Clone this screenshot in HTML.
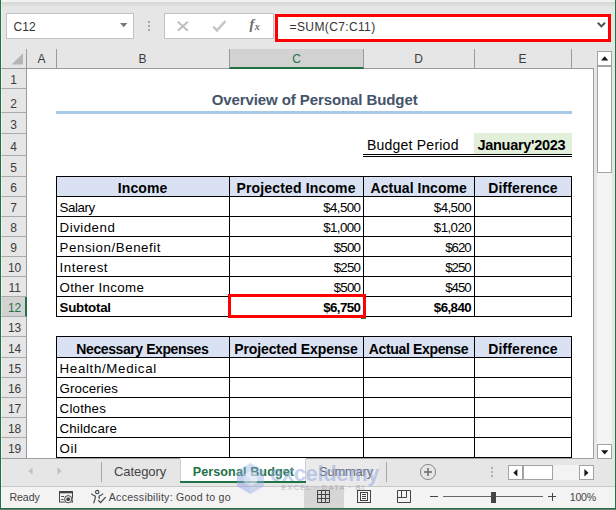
<!DOCTYPE html>
<html><head><meta charset="utf-8"><title>Personal Budget</title>
<style>
html,body{margin:0;padding:0;}
body{width:616px;height:510px;position:relative;overflow:hidden;background:#e6e6e6;font-family:"Liberation Sans",sans-serif;}
body div{position:absolute;box-sizing:border-box;}
.t{white-space:nowrap;}
svg{position:absolute;overflow:visible;}
</style></head><body>

<div style="left:0px;top:0px;width:616px;height:2px;background:#f1f1f0;"></div>
<div style="left:0px;top:2px;width:616px;height:6px;background:linear-gradient(#d6d6d6,#e6e6e6);"></div>
<div style="left:6px;top:13px;width:128px;height:26px;background:#fff;border:1px solid #c3c3c3;"></div>
<div class="t" id="namebox" style="font-size:12px;color:#333;letter-spacing:0.142px;top:20px;line-height:14px;height:14px;left:13.5px;">C12</div>
<svg style="left:120px;top:23px" width="8" height="5"><path d="M0 0h7.4L3.7 4.2z" fill="#777"/></svg>
<div style="left:148px;top:21px;width:2px;height:2px;background:#a6a6a6;"></div>
<div style="left:148px;top:25px;width:2px;height:2px;background:#a6a6a6;"></div>
<div style="left:148px;top:29px;width:2px;height:2px;background:#a6a6a6;"></div>
<div style="left:164px;top:13px;width:110px;height:26px;background:#fff;border:1px solid #c3c3c3;"></div>
<svg style="left:177px;top:21px" width="12" height="11"><path d="M0.8 0.8L10.8 9.8M10.8 0.8L0.8 9.8" stroke="#bdbdbd" stroke-width="1.9" fill="none"/></svg>
<svg style="left:212px;top:20px" width="15" height="12"><path d="M1.2 6.6L5 10.4L13.4 1.2" stroke="#c6c6c6" stroke-width="2.5" fill="none"/></svg>
<div class="t" id="fx" style="left:249.5px;top:17px;font-family:'Liberation Serif',serif;font-style:italic;font-weight:bold;font-size:14px;line-height:15px;height:15px;color:#6a6a6a;letter-spacing:-0.6px;">f<span style="font-size:10px;position:relative;top:0.5px;margin-left:1.2px;">x</span></div>
<div style="left:275px;top:14px;width:336px;height:28px;background:#fff;border:3px solid #ff0000;"></div>
<div class="t" id="formula" style="font-size:12px;color:#333;letter-spacing:0.373px;top:20px;line-height:14px;height:14px;left:289.6px;">=SUM(C7:C11)</div>
<svg style="left:597px;top:22px" width="9" height="6"><path d="M0.8 0.8L4.4 4.4L8 0.8" stroke="#505050" stroke-width="2" fill="none"/></svg>
<div style="left:27px;top:69px;width:566px;height:389px;background:#fff;"></div>
<div style="left:593px;top:69px;width:1px;height:390px;background:#a0a0a0;"></div>
<div style="left:0px;top:458px;width:594px;height:1px;background:#a0a0a0;"></div>
<div style="left:230px;top:49px;width:133px;height:18px;background:#d2d2d2;"></div>
<div style="left:229px;top:67px;width:135px;height:2px;background:#217346;"></div>
<div style="left:0px;top:68px;width:229px;height:1px;background:#9a9a9a;"></div>
<div style="left:364px;top:68px;width:230px;height:1px;background:#9a9a9a;"></div>
<div style="left:26px;top:49px;width:1px;height:19px;background:#9a9a9a;"></div>
<div style="left:56px;top:49px;width:1px;height:19px;background:#9a9a9a;"></div>
<div style="left:229px;top:49px;width:1px;height:19px;background:#9a9a9a;"></div>
<div style="left:363px;top:49px;width:1px;height:19px;background:#9a9a9a;"></div>
<div style="left:474px;top:49px;width:1px;height:19px;background:#9a9a9a;"></div>
<div style="left:571px;top:49px;width:1px;height:19px;background:#9a9a9a;"></div>
<svg style="left:11px;top:53px" width="13" height="12"><path d="M12 0.3V11.5H0.6z" fill="#b5b5b5"/></svg>
<div class="t" id="colA" style="font-size:12px;color:#3c3c3c;letter-spacing:0.000px;top:52px;line-height:14px;height:14px;left:-258.500px;width:600px;text-align:center;">A</div>
<div class="t" id="colB" style="font-size:12px;color:#3c3c3c;letter-spacing:0.000px;top:52px;line-height:14px;height:14px;left:-157.500px;width:600px;text-align:center;">B</div>
<div class="t" id="colC" style="font-size:12px;color:#217346;letter-spacing:0.000px;top:52px;line-height:14px;height:14px;left:-3.500px;width:600px;text-align:center;">C</div>
<div class="t" id="colD" style="font-size:12px;color:#3c3c3c;letter-spacing:0.000px;top:52px;line-height:14px;height:14px;left:118.500px;width:600px;text-align:center;">D</div>
<div class="t" id="colE" style="font-size:12px;color:#3c3c3c;letter-spacing:0.000px;top:52px;line-height:14px;height:14px;left:222.500px;width:600px;text-align:center;">E</div>
<div style="left:26px;top:69px;width:1px;height:389px;background:#9a9a9a;"></div>
<div style="left:1px;top:297px;width:24px;height:19px;background:#d2d2d2;"></div>
<div style="left:25px;top:297px;width:2px;height:20px;background:#217346;"></div>
<div style="left:1px;top:88px;width:25px;height:1px;background:#ababab;"></div>
<div class="t" id="row1" style="font-size:12px;color:#3c3c3c;letter-spacing:0.000px;top:73px;line-height:14px;height:14px;left:-286.500px;width:600px;text-align:center;">1</div>
<div style="left:1px;top:112px;width:25px;height:1px;background:#ababab;"></div>
<div class="t" id="row2" style="font-size:12px;color:#3c3c3c;letter-spacing:0.000px;top:97px;line-height:14px;height:14px;left:-286.500px;width:600px;text-align:center;">2</div>
<div style="left:1px;top:133px;width:25px;height:1px;background:#ababab;"></div>
<div class="t" id="row3" style="font-size:12px;color:#3c3c3c;letter-spacing:0.000px;top:118px;line-height:14px;height:14px;left:-286.500px;width:600px;text-align:center;">3</div>
<div style="left:1px;top:155px;width:25px;height:1px;background:#ababab;"></div>
<div class="t" id="row4" style="font-size:12px;color:#3c3c3c;letter-spacing:0.000px;top:140px;line-height:14px;height:14px;left:-286.500px;width:600px;text-align:center;">4</div>
<div style="left:1px;top:176px;width:25px;height:1px;background:#ababab;"></div>
<div class="t" id="row5" style="font-size:12px;color:#3c3c3c;letter-spacing:0.000px;top:161px;line-height:14px;height:14px;left:-286.500px;width:600px;text-align:center;">5</div>
<div style="left:1px;top:196px;width:25px;height:1px;background:#ababab;"></div>
<div class="t" id="row6" style="font-size:12px;color:#3c3c3c;letter-spacing:0.000px;top:181px;line-height:14px;height:14px;left:-286.500px;width:600px;text-align:center;">6</div>
<div style="left:1px;top:216px;width:25px;height:1px;background:#ababab;"></div>
<div class="t" id="row7" style="font-size:12px;color:#3c3c3c;letter-spacing:0.000px;top:201px;line-height:14px;height:14px;left:-286.500px;width:600px;text-align:center;">7</div>
<div style="left:1px;top:236px;width:25px;height:1px;background:#ababab;"></div>
<div class="t" id="row8" style="font-size:12px;color:#3c3c3c;letter-spacing:0.000px;top:221px;line-height:14px;height:14px;left:-286.500px;width:600px;text-align:center;">8</div>
<div style="left:1px;top:256px;width:25px;height:1px;background:#ababab;"></div>
<div class="t" id="row9" style="font-size:12px;color:#3c3c3c;letter-spacing:0.000px;top:241px;line-height:14px;height:14px;left:-286.500px;width:600px;text-align:center;">9</div>
<div style="left:1px;top:276px;width:25px;height:1px;background:#ababab;"></div>
<div class="t" id="row10" style="font-size:12px;color:#3c3c3c;letter-spacing:0.000px;top:261px;line-height:14px;height:14px;left:-285.400px;width:600px;text-align:center;">10</div>
<div style="left:1px;top:296px;width:25px;height:1px;background:#ababab;"></div>
<div class="t" id="row11" style="font-size:12px;color:#3c3c3c;letter-spacing:0.000px;top:281px;line-height:14px;height:14px;left:-285.400px;width:600px;text-align:center;">11</div>
<div style="left:1px;top:316px;width:25px;height:1px;background:#ababab;"></div>
<div class="t" id="row12" style="font-size:12px;color:#217346;letter-spacing:0.000px;top:301px;line-height:14px;height:14px;left:-285.400px;width:600px;text-align:center;">12</div>
<div style="left:1px;top:336px;width:25px;height:1px;background:#ababab;"></div>
<div class="t" id="row13" style="font-size:12px;color:#3c3c3c;letter-spacing:0.000px;top:321px;line-height:14px;height:14px;left:-285.400px;width:600px;text-align:center;">13</div>
<div style="left:1px;top:357px;width:25px;height:1px;background:#ababab;"></div>
<div class="t" id="row14" style="font-size:12px;color:#3c3c3c;letter-spacing:0.000px;top:342px;line-height:14px;height:14px;left:-285.400px;width:600px;text-align:center;">14</div>
<div style="left:1px;top:377px;width:25px;height:1px;background:#ababab;"></div>
<div class="t" id="row15" style="font-size:12px;color:#3c3c3c;letter-spacing:0.000px;top:362px;line-height:14px;height:14px;left:-285.400px;width:600px;text-align:center;">15</div>
<div style="left:1px;top:397px;width:25px;height:1px;background:#ababab;"></div>
<div class="t" id="row16" style="font-size:12px;color:#3c3c3c;letter-spacing:0.000px;top:382px;line-height:14px;height:14px;left:-285.400px;width:600px;text-align:center;">16</div>
<div style="left:1px;top:417px;width:25px;height:1px;background:#ababab;"></div>
<div class="t" id="row17" style="font-size:12px;color:#3c3c3c;letter-spacing:0.000px;top:402px;line-height:14px;height:14px;left:-285.400px;width:600px;text-align:center;">17</div>
<div style="left:1px;top:437px;width:25px;height:1px;background:#ababab;"></div>
<div class="t" id="row18" style="font-size:12px;color:#3c3c3c;letter-spacing:0.000px;top:422px;line-height:14px;height:14px;left:-285.400px;width:600px;text-align:center;">18</div>
<div class="t" id="row19" style="font-size:12px;color:#3c3c3c;letter-spacing:0.000px;top:442px;line-height:14px;height:14px;left:-285.400px;width:600px;text-align:center;">19</div>
<div class="t" id="title" style="font-size:15px;color:#44546a;letter-spacing:-0.096px;font-weight:bold;top:91px;line-height:17px;height:17px;left:14.652px;width:600px;text-align:center;">Overview of Personal Budget</div>
<div style="left:56px;top:111px;width:516px;height:3px;background:#a9c9e9;"></div>
<div style="left:474px;top:133px;width:98px;height:21px;background:#e2efda;"></div>
<div class="t" id="bp" style="font-size:14px;color:#000;letter-spacing:0.234px;top:137px;line-height:16px;height:16px;left:366.9px;">Budget Period</div>
<div class="t" id="jan" style="font-size:14.5px;color:#000;letter-spacing:-0.303px;font-weight:bold;top:137px;line-height:16px;height:16px;left:221.349px;width:600px;text-align:center;">January'2023</div>
<div style="left:363px;top:154px;width:209px;height:1px;background:#000;"></div>
<div style="left:363px;top:156px;width:209px;height:1px;background:#000;"></div>
<div style="left:57px;top:177px;width:514px;height:19px;background:#d9e1f2;"></div>
<div style="left:56px;top:176px;width:516px;height:1px;background:#000;"></div>
<div style="left:56px;top:196px;width:516px;height:1px;background:#000;"></div>
<div style="left:56px;top:216px;width:516px;height:1px;background:#000;"></div>
<div style="left:56px;top:236px;width:516px;height:1px;background:#000;"></div>
<div style="left:56px;top:256px;width:516px;height:1px;background:#000;"></div>
<div style="left:56px;top:276px;width:516px;height:1px;background:#000;"></div>
<div style="left:56px;top:296px;width:516px;height:1px;background:#000;"></div>
<div style="left:56px;top:316px;width:516px;height:1px;background:#000;"></div>
<div style="left:56px;top:176px;width:1px;height:141px;background:#000;"></div>
<div style="left:229px;top:176px;width:1px;height:141px;background:#000;"></div>
<div style="left:363px;top:176px;width:1px;height:141px;background:#000;"></div>
<div style="left:474px;top:176px;width:1px;height:141px;background:#000;"></div>
<div style="left:571px;top:176px;width:1px;height:141px;background:#000;"></div>
<div class="t" id="h5_Income" style="font-size:14px;color:#000;letter-spacing:0.081px;font-weight:bold;top:180px;line-height:16px;height:16px;left:-157.459px;width:600px;text-align:center;">Income</div>
<div class="t" id="h5_Projected_Income" style="font-size:14px;color:#000;letter-spacing:0.156px;font-weight:bold;top:180px;line-height:16px;height:16px;left:-3.922px;width:600px;text-align:center;">Projected Income</div>
<div class="t" id="h5_Actual_Income" style="font-size:14px;color:#000;letter-spacing:0.058px;font-weight:bold;top:180px;line-height:16px;height:16px;left:118.729px;width:600px;text-align:center;">Actual Income</div>
<div class="t" id="h5_Difference" style="font-size:14px;color:#000;letter-spacing:0.090px;font-weight:bold;top:180px;line-height:16px;height:16px;left:223.045px;width:600px;text-align:center;">Difference</div>
<div class="t" id="l_Salary" style="font-size:13.3px;color:#000;letter-spacing:-0.437px;top:200px;line-height:15px;height:15px;left:59.6px;">Salary</div>
<div class="t" id="v5_0_0" style="font-size:13.3px;color:#000;letter-spacing:-0.582px;top:200px;line-height:15px;height:15px;right:255.682px;">$4,500</div>
<div class="t" id="v5_0_1" style="font-size:13.3px;color:#000;letter-spacing:-0.582px;top:200px;line-height:15px;height:15px;right:144.982px;">$4,500</div>
<div class="t" id="l_Dividend" style="font-size:13.3px;color:#000;letter-spacing:0.491px;top:220px;line-height:15px;height:15px;left:59.6px;">Dividend</div>
<div class="t" id="v5_1_0" style="font-size:13.3px;color:#000;letter-spacing:-0.582px;top:220px;line-height:15px;height:15px;right:255.682px;">$1,000</div>
<div class="t" id="v5_1_1" style="font-size:13.3px;color:#000;letter-spacing:-0.582px;top:220px;line-height:15px;height:15px;right:144.982px;">$1,020</div>
<div class="t" id="l_Pension_Benefit" style="font-size:13.3px;color:#000;letter-spacing:0.553px;top:240px;line-height:15px;height:15px;left:59.6px;">Pension/Benefit</div>
<div class="t" id="v5_2_0" style="font-size:13.3px;color:#000;letter-spacing:-0.771px;top:240px;line-height:15px;height:15px;right:255.871px;">$500</div>
<div class="t" id="v5_2_1" style="font-size:13.3px;color:#000;letter-spacing:-1.071px;top:240px;line-height:15px;height:15px;right:145.471px;">$620</div>
<div class="t" id="l_Interest" style="font-size:13.3px;color:#000;letter-spacing:0.505px;top:260px;line-height:15px;height:15px;left:59.6px;">Interest</div>
<div class="t" id="v5_3_0" style="font-size:13.3px;color:#000;letter-spacing:-0.771px;top:260px;line-height:15px;height:15px;right:255.871px;">$250</div>
<div class="t" id="v5_3_1" style="font-size:13.3px;color:#000;letter-spacing:-1.071px;top:260px;line-height:15px;height:15px;right:145.471px;">$250</div>
<div class="t" id="l_Other_Income" style="font-size:13.3px;color:#000;letter-spacing:0.340px;top:280px;line-height:15px;height:15px;left:59.6px;">Other Income</div>
<div class="t" id="v5_4_0" style="font-size:13.3px;color:#000;letter-spacing:-0.771px;top:280px;line-height:15px;height:15px;right:255.871px;">$500</div>
<div class="t" id="v5_4_1" style="font-size:13.3px;color:#000;letter-spacing:-1.071px;top:280px;line-height:15px;height:15px;right:145.471px;">$450</div>
<div class="t" id="l_Subtotal" style="font-size:13.3px;color:#000;letter-spacing:-0.254px;font-weight:bold;top:300px;line-height:15px;height:15px;left:59.6px;">Subtotal</div>
<div class="t" id="v5_5_0" style="font-size:13.3px;color:#000;letter-spacing:-0.582px;font-weight:bold;top:300px;line-height:15px;height:15px;right:255.682px;">$6,750</div>
<div class="t" id="v5_5_1" style="font-size:13.3px;color:#000;letter-spacing:-0.582px;font-weight:bold;top:300px;line-height:15px;height:15px;right:144.982px;">$6,840</div>
<div style="left:57px;top:337px;width:514px;height:20px;background:#d9e1f2;"></div>
<div style="left:56px;top:336px;width:516px;height:1px;background:#000;"></div>
<div style="left:56px;top:357px;width:516px;height:1px;background:#000;"></div>
<div style="left:56px;top:377px;width:516px;height:1px;background:#000;"></div>
<div style="left:56px;top:397px;width:516px;height:1px;background:#000;"></div>
<div style="left:56px;top:417px;width:516px;height:1px;background:#000;"></div>
<div style="left:56px;top:437px;width:516px;height:1px;background:#000;"></div>
<div style="left:56px;top:457px;width:516px;height:1px;background:#000;"></div>
<div style="left:56px;top:336px;width:1px;height:122px;background:#000;"></div>
<div style="left:229px;top:336px;width:1px;height:122px;background:#000;"></div>
<div style="left:363px;top:336px;width:1px;height:122px;background:#000;"></div>
<div style="left:474px;top:336px;width:1px;height:122px;background:#000;"></div>
<div style="left:571px;top:336px;width:1px;height:122px;background:#000;"></div>
<div class="t" id="h13_Necessary_Expenses" style="font-size:14px;color:#000;letter-spacing:-0.409px;font-weight:bold;top:341px;line-height:16px;height:16px;left:-157.704px;width:600px;text-align:center;">Necessary Expenses</div>
<div class="t" id="h13_Projected_Expense" style="font-size:14px;color:#000;letter-spacing:-0.101px;font-weight:bold;top:341px;line-height:16px;height:16px;left:-4.051px;width:600px;text-align:center;">Projected Expense</div>
<div class="t" id="h13_Actual_Expense" style="font-size:14px;color:#000;letter-spacing:-0.355px;font-weight:bold;top:341px;line-height:16px;height:16px;left:118.522px;width:600px;text-align:center;">Actual Expense</div>
<div class="t" id="h13_Difference" style="font-size:14px;color:#000;letter-spacing:0.090px;font-weight:bold;top:341px;line-height:16px;height:16px;left:223.045px;width:600px;text-align:center;">Difference</div>
<div class="t" id="l_Health_Medical" style="font-size:13.3px;color:#000;letter-spacing:0.662px;top:361px;line-height:15px;height:15px;left:59.6px;">Health/Medical</div>
<div class="t" id="l_Groceries" style="font-size:13.3px;color:#000;letter-spacing:0.095px;top:381px;line-height:15px;height:15px;left:59.6px;">Groceries</div>
<div class="t" id="l_Clothes" style="font-size:13.3px;color:#000;letter-spacing:0.198px;top:401px;line-height:15px;height:15px;left:59.6px;">Clothes</div>
<div class="t" id="l_Childcare" style="font-size:13.3px;color:#000;letter-spacing:0.141px;top:421px;line-height:15px;height:15px;left:59.6px;">Childcare</div>
<div class="t" id="l_Oil" style="font-size:13.3px;color:#000;letter-spacing:0.577px;top:441px;line-height:15px;height:15px;left:59.6px;">Oil</div>
<div style="left:361px;top:315px;width:5px;height:4px;background:#217346;"></div>
<div style="left:228px;top:294px;width:138px;height:24px;border:3px solid #ff0000;"></div>
<div style="left:597px;top:66px;width:15px;height:378px;background:#f3f3f3;"></div>
<div style="left:597px;top:51px;width:15px;height:15px;background:#fff;border:1px solid #a3a3a3;"></div>
<svg style="left:601px;top:56px" width="8" height="5"><path d="M0 4.4L3.7 0.3L7.4 4.4z" fill="#1a1a1a"/></svg>
<div style="left:597px;top:66px;width:15px;height:107px;background:#fff;border:1px solid #a3a3a3;"></div>
<div style="left:597px;top:444px;width:15px;height:15px;background:#fff;border:1px solid #a3a3a3;"></div>
<svg style="left:601px;top:450px" width="8" height="5"><path d="M0 0.3h7.4L3.7 4.4z" fill="#1a1a1a"/></svg>
<svg style="left:28px;top:467px" width="5" height="8"><path d="M4.6 0.2V7.8L0.4 4z" fill="#c2c2c2"/></svg>
<svg style="left:57px;top:467px" width="5" height="8"><path d="M0.4 0.2V7.8L4.6 4z" fill="#c2c2c2"/></svg>
<div style="left:101px;top:462px;width:1px;height:20px;background:#a8a8a8;"></div>
<div class="t" id="tab1" style="font-size:13px;color:#444;letter-spacing:-0.070px;top:464px;line-height:15px;height:15px;left:114px;">Category</div>
<div style="left:180px;top:458px;width:126px;height:23px;background:#fff;"></div>
<div style="left:180px;top:481px;width:126px;height:2px;background:#217346;"></div>
<div style="left:180px;top:459px;width:1px;height:22px;background:#cfcfcf;"></div>
<div style="left:305px;top:459px;width:1px;height:22px;background:#cfcfcf;"></div>
<div class="t" id="tab2" style="font-size:12.6px;color:#217346;letter-spacing:0.087px;font-weight:bold;top:465px;line-height:14px;height:14px;left:192.7px;">Personal Budget</div>
<div class="t" id="tab3" style="font-size:13px;color:#444;letter-spacing:-0.244px;top:464px;line-height:15px;height:15px;left:319px;">Summary</div>
<div style="left:386px;top:462px;width:1px;height:20px;background:#a8a8a8;"></div>
<svg style="left:419px;top:463px" width="18" height="18"><circle cx="9" cy="9" r="7.6" fill="none" stroke="#8a8a8a" stroke-width="1"/><path d="M9 5V13M5 9H13" stroke="#6a6a6a" stroke-width="1.5"/></svg>
<div style="left:491px;top:467px;width:2px;height:2px;background:#b0b0b0;"></div>
<div style="left:491px;top:471px;width:2px;height:2px;background:#b0b0b0;"></div>
<div style="left:491px;top:475px;width:2px;height:2px;background:#b0b0b0;"></div>
<div style="left:522px;top:465px;width:58px;height:15px;background:#f3f3f3;"></div>
<div style="left:508px;top:465px;width:15px;height:15px;background:#fff;border:1px solid #a3a3a3;"></div>
<svg style="left:513px;top:469px" width="5" height="8"><path d="M4.4 0V7.4L0.3 3.7z" fill="#1a1a1a"/></svg>
<div style="left:523px;top:465px;width:30px;height:15px;background:#fff;border:1px solid #a3a3a3;"></div>
<div style="left:579px;top:465px;width:15px;height:15px;background:#fff;border:1px solid #a3a3a3;"></div>
<svg style="left:584px;top:469px" width="5" height="8"><path d="M0.4 0V7.4L4.5 3.7z" fill="#1a1a1a"/></svg>
<div style="left:0px;top:486px;width:616px;height:1px;background:#c8c8c8;"></div>
<div style="left:0px;top:487px;width:616px;height:21px;background:#f3f3f3;"></div>
<div class="t" id="ready" style="font-size:10.6px;color:#444;letter-spacing:-0.056px;top:491px;line-height:12px;height:12px;left:9.4px;">Ready</div>
<svg style="left:59px;top:491px" width="15" height="13"><rect x="0.5" y="0.5" width="13" height="10.5" fill="none" stroke="#444" stroke-width="1"/><path d="M0.5 1.5h13" stroke="#444" stroke-width="1.6"/><path d="M2.2 5.5h3M2.2 8.5h2.4" stroke="#444" stroke-width="1.2"/><circle cx="9.2" cy="8.2" r="4.3" fill="#f3f3f3"/><circle cx="9.2" cy="8.2" r="3.6" fill="none" stroke="#444" stroke-width="1"/><circle cx="9.2" cy="8.2" r="1.9" fill="#444"/></svg>
<svg style="left:90px;top:489px" width="17" height="16"><circle cx="7.2" cy="3.1" r="1.7" fill="none" stroke="#444" stroke-width="1.1"/><path d="M1.3 4.6C3 6.6 5 6.8 5.3 7.2C5.6 9.5 4.6 12 3.6 14.3" stroke="#444" fill="none" stroke-width="1.15"/><path d="M13.1 4.6C11.4 6.6 9.4 6.8 9.1 7.2C9 8.2 9.1 9 9.3 9.8" stroke="#444" fill="none" stroke-width="1.15"/><path d="M8.3 11.2l2.3 2.4L15.6 8.2" stroke="#444" fill="none" stroke-width="1.25"/></svg>
<div class="t" id="acc" style="font-size:10.6px;color:#444;letter-spacing:0.242px;top:491px;line-height:12px;height:12px;left:108.8px;">Accessibility: Good to go</div>
<div style="left:304px;top:487px;width:40px;height:21px;background:#d6d6d6;"></div>
<svg style="left:317px;top:490px" width="14" height="14"><path d="M0.5 0.5h12v12h-12zM4.5 0.5v12M8.5 0.5v12M0.5 4.5h12M0.5 8.5h12" fill="none" stroke="#444"/></svg>
<svg style="left:357px;top:490px" width="15" height="14"><rect x="0.5" y="0.5" width="13" height="12" fill="none" stroke="#444"/><rect x="3.5" y="2.5" width="7" height="8" fill="none" stroke="#444"/><path d="M5 4.5h4M5 6.5h4M5 8.5h4" stroke="#444"/></svg>
<svg style="left:397px;top:490px" width="15" height="14"><path d="M0.5 0.5h13v12h-13zM0.5 7.5h9M4.5 0.5v7M9.5 0.5v7" fill="none" stroke="#444"/></svg>
<div style="left:430px;top:496px;width:8px;height:1px;background:#444;"></div>
<div style="left:443px;top:496px;width:100px;height:1px;background:#666;"></div>
<div style="left:491px;top:492px;width:5px;height:11px;background:#444;"></div>
<div style="left:548px;top:496px;width:8px;height:1px;background:#444;"></div>
<div style="left:551.5px;top:492.5px;width:1px;height:8px;background:#444;"></div>
<div class="t" id="zoom" style="font-size:10.6px;color:#444;letter-spacing:-0.190px;top:491px;line-height:12px;height:12px;left:569.7px;">100%</div>
<svg style="left:236px;top:462px" width="30" height="33"><path d="M14.5 1L28 8.75V24.25L14.5 32L1 24.25V8.75z" fill="rgba(150,175,230,0.42)"/><path d="M14.5 9L21 12.5V20.5L14.5 24L8 20.5V12.5z" fill="rgba(255,255,255,0.45)"/><path d="M14.5 16.5V32L1 24.25V8.75z" fill="rgba(120,150,215,0.12)"/></svg>
<div style="left:306px;top:459px;width:73px;height:27px;background:rgba(255,255,255,0.18);"></div>
<div class="t" id="wm1" style="font-size:22px;color:rgba(140,165,225,0.5);letter-spacing:-0.366px;font-weight:bold;top:461px;line-height:25px;height:25px;left:270px;">exceldemy</div>
<div class="t" id="wm2" style="font-size:7.5px;color:rgba(130,130,150,0.38);letter-spacing:1.116px;font-weight:bold;top:483px;line-height:9px;height:9px;left:281.2px;">EXCEL · DATA · BI</div>
<div style="left:1px;top:2px;width:1px;height:506px;background:rgba(255,255,255,0.35);"></div>
<div style="left:0px;top:0px;width:1px;height:510px;background:#217346;"></div>
<div style="left:615px;top:0px;width:1px;height:510px;background:#217346;"></div>
<div style="left:0px;top:508px;width:616px;height:1px;background:#217346;"></div>
<div style="left:0px;top:509px;width:616px;height:1px;background:#6e7a72;"></div>
</body></html>
